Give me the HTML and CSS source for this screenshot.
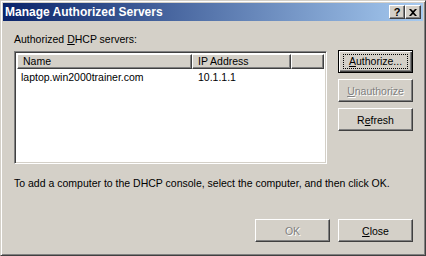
FILE: index.html
```html
<!DOCTYPE html>
<html lang="en">
<head>
    <meta charset="UTF-8">
    <title>Manage Authorized Servers</title>
    <link rel="stylesheet" href="styles.css">
</head>
<body>
    <div class="window">
        <div class="titlebar">
            <span class="title">Manage Authorized Servers</span>
            <div class="caption-buttons">
                <button class="caption-btn help">?</button>
                <button class="caption-btn close">
                    <svg width="8" height="7" viewBox="0 0 8 7"><path d="M0 0h2l2 2 2-2h2L5 3.5 8 7H6L4 5 2 7H0l3-3.5z" fill="#000"/></svg>
                </button>
            </div>
        </div>

        <div class="dialog">
            <div class="label">Authorized <u>D</u>HCP servers:</div>
            <div class="main-row">
                <div class="listview">
                    <div class="list-header">
                        <div class="col-head col-name">Name</div>
                        <div class="col-head col-ip">IP Address</div>
                        <div class="col-head col-fill"></div>
                    </div>
                    <div class="list-row">
                        <div class="cell col-name">laptop.win2000trainer.com</div>
                        <div class="cell col-ip">10.1.1.1</div>
                    </div>
                </div>
                <div class="side-buttons">
                    <button class="btn default"><span class="focus"><u>A</u>uthorize...</span></button>
                    <button class="btn" disabled><u>U</u>nauthorize</button>
                    <button class="btn">R<u>e</u>fresh</button>
                </div>
            </div>
            <p class="hint">To add a computer to the DHCP console, select the computer, and then click OK.</p>
            <div class="bottom-buttons">
                <button class="btn" disabled>OK</button>
                <button class="btn"><u>C</u>lose</button>
            </div>
        </div>
    </div>
</body>
</html>
```

FILE: styles.css
```css
body {
    margin: 0;
    font-family: "Liberation Sans", Arial, sans-serif;
    font-size: 10.5px;
    color: #000;
}
.window {
    width: 426px;
    height: 256px;
    box-sizing: border-box;
    background-color: #d4d0c8;
    border: 1px solid;
    border-color: #d4d0c8 #404040 #404040 #d4d0c8;
    box-shadow: inset 1px 1px #fff, inset -1px -1px #808080;
    padding: 2px;
    display: flex;
    flex-direction: column;
}
.titlebar {
    height: 18px;
    display: flex;
    align-items: center;
    justify-content: space-between;
    padding-left: 2px;
    background: linear-gradient(to right, #0a246a, #a6caf0);
    color: #fff;
    font-weight: bold;
    font-size: 12px;
}
.caption-buttons {
    display: flex;
    margin-right: 2px;
}
.caption-btn {
    width: 16px;
    height: 14px;
    padding: 0;
    margin: 0;
    box-sizing: border-box;
    background-color: #d4d0c8;
    border: 1px solid;
    border-color: #fff #404040 #404040 #fff;
    box-shadow: inset -1px -1px #808080;
    font-family: "Liberation Sans", Arial, sans-serif;
    font-weight: bold;
    font-size: 11px;
    line-height: 11px;
    display: flex;
    align-items: center;
    justify-content: center;
}
.dialog {
    flex: 1;
    padding: 12px 10px 0 11px;
}
.label {
    line-height: 13px;
    margin-bottom: 4px;
}
.main-row {
    display: flex;
    align-items: flex-start;
}
.listview {
    margin-top: 1px;
    width: 313px;
    height: 113px;
    box-sizing: border-box;
    background-color: #fff;
    border: 1px solid;
    border-color: #808080 #fff #fff #808080;
    box-shadow: inset 1px 1px #404040, inset -1px -1px #d4d0c8;
    padding: 2px;
}
.list-header {
    display: flex;
    height: 15px;
}
.col-head {
    box-sizing: border-box;
    height: 15px;
    background-color: #d4d0c8;
    border: 1px solid;
    border-color: #fff #404040 #404040 #fff;
    box-shadow: inset -1px -1px #808080;
    padding-left: 5px;
    line-height: 13px;
}
.col-name {
    width: 175px;
}
.col-ip {
    width: 99px;
}
.col-fill {
    flex: 1;
}
.list-row {
    display: flex;
    height: 15px;
    line-height: 15px;
    margin-top: 1px;
}
.cell {
    padding-left: 4px;
    box-sizing: border-box;
}
.cell.col-ip {
    padding-left: 6px;
}
.side-buttons {
    margin-left: 11px;
    display: flex;
    flex-direction: column;
    gap: 6px;
}
.btn {
    width: 75px;
    height: 23px;
    box-sizing: border-box;
    padding: 0;
    margin: 0;
    background-color: #d4d0c8;
    border: 1px solid;
    border-color: #fff #404040 #404040 #fff;
    box-shadow: inset -1px -1px #808080, inset 1px 1px #d4d0c8;
    font-family: "Liberation Sans", Arial, sans-serif;
    font-size: 10.5px;
    color: #000;
    display: flex;
    align-items: center;
    justify-content: center;
}
.btn:disabled {
    color: #808080;
    text-shadow: 1px 1px #fff;
}
.btn.default {
    border: 1px solid #000;
    box-shadow: inset 1px 1px #fff, inset -1px -1px #404040, inset -2px -2px #808080;
}
.focus {
    border: 1px dotted #000;
    width: 63px;
    height: 13px;
    line-height: 13px;
    display: flex;
    align-items: center;
    justify-content: center;
}
.hint {
    margin: 13px 0 0;
    line-height: 13px;
}
.bottom-buttons {
    display: flex;
    justify-content: flex-end;
    gap: 8px;
    margin-top: 29px;
}
```
